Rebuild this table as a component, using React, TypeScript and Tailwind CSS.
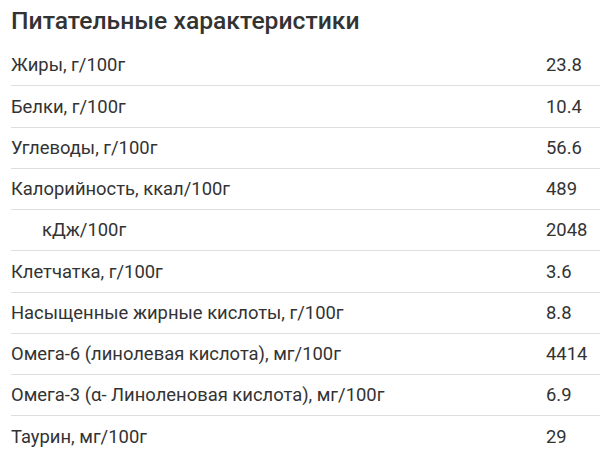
const rows: { label: string; value: string; indent?: boolean }[] = [
  { label: "Жиры, г/100г", value: "23.8" },
  { label: "Белки, г/100г", value: "10.4" },
  { label: "Углеводы, г/100г", value: "56.6" },
  { label: "Калорийность, ккал/100г", value: "489" },
  { label: "кДж/100г", value: "2048", indent: true },
  { label: "Клетчатка, г/100г", value: "3.6" },
  { label: "Насыщенные жирные кислоты, г/100г", value: "8.8" },
  { label: "Омега-6 (линолевая кислота), мг/100г", value: "4414" },
  { label: "Омега-3 (α- Линоленовая кислота), мг/100г", value: "6.9" },
  { label: "Таурин, мг/100г", value: "29" },
];

export default function App() {
  return (
    <div className="w-[600px] h-[460px] overflow-hidden bg-white pl-[11px] text-[#333] font-['Roboto',sans-serif]">
      <h2 className="h-[45px] pt-[5px] text-[24.7px] leading-[32px] font-medium text-[#333]">Питательные характеристики</h2>
      <div className="flex flex-col">
        {rows.map((r, i) => (
          <div
            key={r.label}
            className={`flex items-center h-[41.25px] text-[18.4px] ${i < rows.length - 1 ? "border-b border-[#dedede]" : ""}`}
          >
            <div className={`flex-1 ${r.indent ? "pl-[31px]" : ""}`}>{r.label}</div>
            <div className="w-[54px]">{r.value}</div>
          </div>
        ))}
      </div>
    </div>
  );
}
